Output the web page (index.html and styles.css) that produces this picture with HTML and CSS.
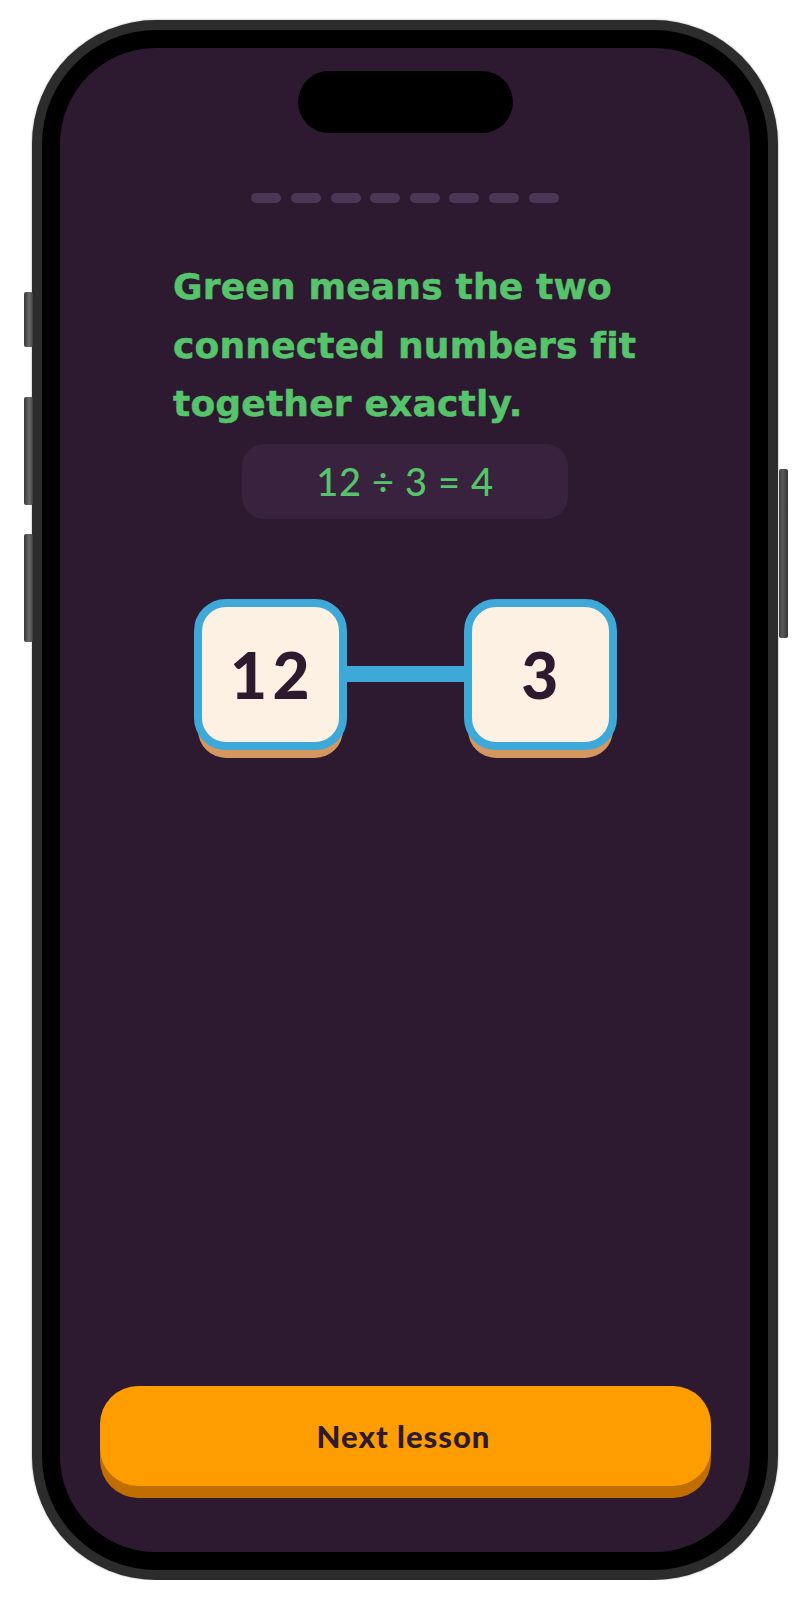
FILE: index.html
```html
<!DOCTYPE html>
<html lang="en">
<head>
<meta charset="utf-8">
<title>Lesson</title>
<link rel="stylesheet" href="styles.css">
</head>
<body>
<div class="device">
  <span class="side-btn side-btn--action"></span>
  <span class="side-btn side-btn--vol-up"></span>
  <span class="side-btn side-btn--vol-down"></span>
  <span class="side-btn side-btn--power"></span>
  <div class="bezel">
    <main class="screen">
      <div class="island"></div>
      <div class="progress">
        <span class="step"></span><span class="step"></span><span class="step"></span><span class="step"></span>
        <span class="step"></span><span class="step"></span><span class="step"></span><span class="step"></span>
      </div>
      <h1 class="prompt">Green means the two connected numbers fit together exactly.</h1>
      <div class="equation">12 ÷ 3 = 4</div>
      <div class="pair">
        <div class="tile">12</div>
        <div class="link"></div>
        <div class="tile">3</div>
      </div>
      <div class="spacer"></div>
      <button class="next-btn" type="button">Next lesson</button>
    </main>
  </div>
</div>
</body>
</html>
```

FILE: styles.css
```css
* {
  box-sizing: border-box;
}

body {
  margin: 0;
  background: #ffffff;
  font-family: "Lato", "Noto Sans", sans-serif;
}

/* phone body */
.device {
  position: relative;
  width: 746px;
  height: 1560px;
  margin: 20px 0 0 32px;
  padding: 10px;
  border-radius: 124px;
  background: #2c2c2c;
  box-shadow: 0 0 2px rgba(0, 0, 0, 0.45);
}

.bezel {
  height: 100%;
  padding: 18px;
  border-radius: 114px;
  background: #000000;
}

.side-btn {
  position: absolute;
  width: 9px;
  border-radius: 2px;
  background: linear-gradient(90deg, #3a3a3a, #6a6a6a 60%, #3e3e3e);
}

.side-btn--action   { left: -8px; top: 272px; height: 55px; }
.side-btn--vol-up   { left: -8px; top: 377px; height: 108px; }
.side-btn--vol-down { left: -8px; top: 514px; height: 108px; }
.side-btn--power    { right: -10px; top: 449px; height: 169px; background: linear-gradient(90deg, #3e3e3e, #5a5a5a 40%, #333333); }

/* screen */
.screen {
  height: 100%;
  border-radius: 96px;
  background: #2d1a30;
  display: flex;
  flex-direction: column;
  align-items: center;
  padding-top: 23px;
  overflow: hidden;
}

.island {
  width: 215px;
  height: 62px;
  border-radius: 31px;
  background: #000000;
}

.progress {
  display: flex;
  gap: 9.6px;
  margin-top: 60px;
}

.step {
  width: 30px;
  height: 10px;
  border-radius: 5px;
  background: #4c3656;
}

.prompt {
  width: 472px;
  margin: 55px 0 0 8px;
  font-family: "DejaVu Sans", "Lato", sans-serif;
  font-size: 36px;
  line-height: 58.5px;
  font-weight: 700;
  letter-spacing: 0.2px;
  -webkit-text-stroke: 0.5px #55c46b;
  color: #55c46b;
}

.equation {
  width: 326px;
  height: 75px;
  margin-top: 10px;
  border-radius: 22px;
  background: #38223e;
  display: flex;
  align-items: center;
  justify-content: center;
  font-size: 38px;
  font-weight: 500;
  letter-spacing: 0.7px;
  color: #55c46b;
}

/* connected number tiles */
.pair {
  display: flex;
  align-items: center;
  margin-top: 80px;
}

.tile {
  width: 153px;
  height: 151px;
  border: 8px solid #3ea9d9;
  border-radius: 32px;
  background: #fdf1e3;
  box-shadow: 0 12px 0 -4px #d4975d;
  display: flex;
  align-items: center;
  justify-content: center;
  padding-left: 5px;
  font-size: 64px;
  font-weight: 900;
  color: #2d1a2e;
  letter-spacing: 5.5px;
}

.link {
  width: 117px;
  height: 16px;
  background: #3ea9d9;
}

.spacer {
  flex: 1;
}

.next-btn {
  width: 611px;
  height: 100px;
  margin-bottom: 66px;
  border: 0;
  border-radius: 38px;
  background: #fe9d00;
  box-shadow: 0 12px 0 #c06e00;
  padding-left: 3px;
  font-family: "Lato", "Noto Sans", sans-serif;
  font-size: 31px;
  font-weight: 900;
  letter-spacing: 1px;
  color: #2d1a2e;
}
```
